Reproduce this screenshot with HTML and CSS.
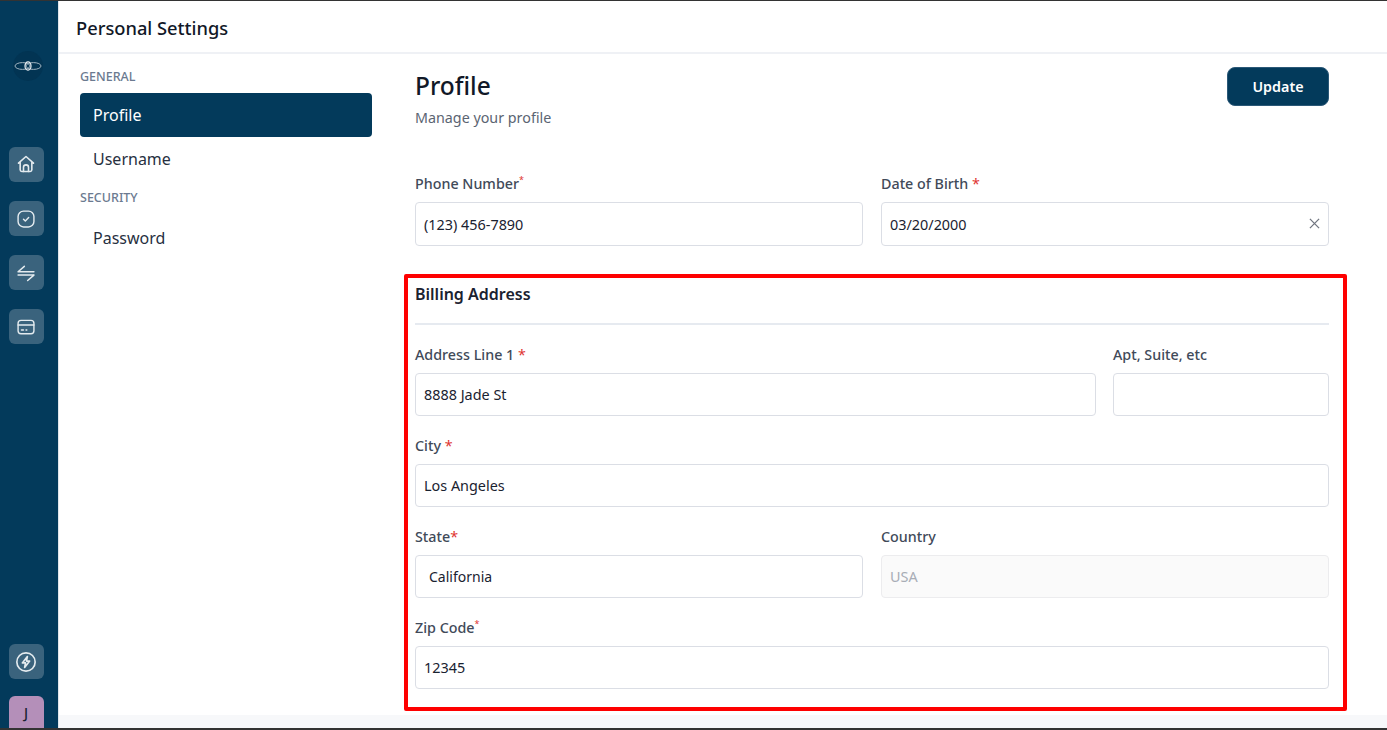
FILE: index.html
```html
<!DOCTYPE html>
<html lang="en">
<head>
<meta charset="utf-8">
<title>Personal Settings</title>
<link rel="stylesheet" href="styles.css">
</head>
<body>
<div class="app">
  <aside class="rail">
    <div class="logo">
      <svg width="30" height="30" viewBox="0 0 30 30" fill="none"><circle cx="15" cy="15" r="15" fill="#023453"/><ellipse cx="9.5" cy="15" rx="7.5" ry="3.4" stroke="#9fb3c0" stroke-width="1"/><ellipse cx="20.5" cy="15" rx="7.5" ry="3.4" stroke="#9fb3c0" stroke-width="1"/><ellipse cx="15" cy="15" rx="3" ry="4.2" stroke="#eef2f5" stroke-width="1.2"/></svg>
    </div>
    <nav class="rail-nav">
      <a class="rail-btn"><svg class="home" width="20" height="20" viewBox="0 0 24 24" fill="none" stroke="#e4ebef" stroke-width="1.9" stroke-linejoin="round" stroke-linecap="round"><path d="M3 11 12 3l9 8M5 9.5V19a2 2 0 0 0 2 2h10a2 2 0 0 0 2-2V9.5"/><path d="M9 21v-5a3 3 0 0 1 6 0v5"/></svg></a>
      <a class="rail-btn"><svg width="20" height="20" viewBox="0 0 24 24" fill="none" stroke="#e4ebef" stroke-width="1.7" stroke-linejoin="round" stroke-linecap="round"><rect x="2.5" y="2.5" width="19" height="19" rx="6.5"/><path d="m9 12.3 2.2 2.2 4-4.2"/></svg></a>
      <a class="rail-btn"><svg width="20" height="20" viewBox="0 0 24 24" fill="none" stroke="#e4ebef" stroke-width="1.8" stroke-linejoin="round" stroke-linecap="round"><path d="M2.5 10.5h19M2.5 10.5 10 4M21.5 14.5h-19M21.5 14.5 14 21"/></svg></a>
      <a class="rail-btn"><svg width="20" height="20" viewBox="0 0 24 24" fill="none" stroke="#e4ebef" stroke-width="1.7" stroke-linejoin="round" stroke-linecap="round"><rect x="2.5" y="4" width="19" height="16" rx="3.5"/><path d="M2.5 9.5h19M6.5 15.5h2.5M12 15.5h1"/></svg></a>
    </nav>
    <div class="rail-bottom">
      <a class="rail-btn"><svg width="22" height="22" viewBox="0 0 24 24" fill="none" stroke="#e4ebef" stroke-width="1.8" stroke-linejoin="round"><circle cx="12" cy="12" r="10"/><path d="M13.5 6 8 13h3.5l-1 5L16 11h-3.5z"/></svg></a>
      <div class="avatar">J</div>
    </div>
  </aside>
  <div class="page">
    <header class="topbar"><h1>Personal Settings</h1></header>
    <div class="body">
      <nav class="side">
        <div class="side-head">GENERAL</div>
        <a class="side-item active">Profile</a>
        <a class="side-item">Username</a>
        <div class="side-head second">SECURITY</div>
        <a class="side-item">Password</a>
      </nav>
      <main class="content">
        <div class="title-row">
          <div class="title-text">
            <h2>Profile</h2>
            <p class="sub">Manage your profile</p>
          </div>
          <button class="update">Update</button>
        </div>
        <div class="grid two first">
          <div class="field">
            <label>Phone Number<sup class="star">*</sup></label>
            <div class="input tall">(123) 456-7890</div>
          </div>
          <div class="field">
            <label>Date of Birth <span class="star">*</span></label>
            <div class="input tall between"><span>03/20/2000</span>
              <svg width="11" height="11" viewBox="0 0 12 12" stroke="#70757f" stroke-width="1.4"><path d="M1 1l10 10M11 1 1 11"/></svg>
            </div>
          </div>
        </div>
        <section class="billing">
          <h3>Billing Address</h3>
          <div class="grid addr">
            <div class="field">
              <label>Address Line 1 <span class="star">*</span></label>
              <div class="input">8888 Jade St</div>
            </div>
            <div class="field">
              <label>Apt, Suite, etc</label>
              <div class="input"></div>
            </div>
          </div>
          <div class="field">
            <label>City <span class="star">*</span></label>
            <div class="input">Los Angeles</div>
          </div>
          <div class="grid two">
            <div class="field">
              <label>State<span class="star">*</span></label>
              <div class="input inset">California</div>
            </div>
            <div class="field">
              <label>Country</label>
              <div class="input disabled">USA</div>
            </div>
          </div>
          <div class="field">
            <label>Zip Code<sup class="star">*</sup></label>
            <div class="input">12345</div>
          </div>
        </section>
      </main>
    </div>
    <div class="foot"></div>
  </div>
</div>
<div class="annotation"></div>
</body>
</html>
```
FILE: styles.css
```css
* { box-sizing: border-box; }
html, body { margin: 0; height: 730px; overflow: hidden; }
body {
  font-family: "Noto Sans", "Open Sans", sans-serif;
  color: #1a2230;
  background: #fff;
  position: relative;
}
.app {
  display: flex;
  height: 730px;
  border-top: 1px solid #333;
  border-bottom: 2px solid #333;
}
.rail {
  width: 59px;
  flex: none;
  background: #033a5b;
  display: flex;
  flex-direction: column;
  align-items: center;
  padding-right: 6px;
  border-right: 1px solid #dfe5ea;
}
.logo { margin: 50px 0 0 4px; height: 30px; display: flex; align-items: center; }
.rail-nav { display: flex; flex-direction: column; gap: 19px; margin-top: 66px; }
.rail-btn {
  width: 35px;
  height: 35px;
  border-radius: 6px;
  background: #3a637d;
  display: flex;
  align-items: center;
  justify-content: center;
}
.home { margin-top: -2px; }
.rail-bottom { margin-top: auto; display: flex; flex-direction: column; gap: 17px; }
.avatar {
  width: 35px;
  height: 32px;
  border-radius: 6px 6px 0 0;
  background: #b48fb9;
  color: #1a2230;
  font-size: 14px;
  font-weight: 500;
  display: flex;
  align-items: center;
  justify-content: center;
}
.page { flex: 1; display: flex; flex-direction: column; min-width: 0; }
.topbar {
  height: 53px;
  border-bottom: 2px solid #eff1f5;
  padding: 13px 0 0 17px;
}
h1 { margin: 0; font-size: 18.3px; line-height: 28px; font-weight: 500; color: #111827; }
.body { flex: 1; display: flex; min-height: 0; }
.side { width: 313px; flex: none; padding: 14px 0 0 21px; }
.side-head { font-size: 12.5px; line-height: 18px; font-weight: 500; color: #6b7a90; margin-bottom: 7px; }
.side-head.second { margin-top: 8px; margin-bottom: 9px; }
.side-item {
  display: block;
  height: 44px;
  padding: 0 13px;
  font-size: 16px;
  line-height: 44px;
  color: #27303f;
  border-radius: 4px;
}
.side-item.active { background: #033a5b; color: #fff; }
.content { width: 914px; margin-left: 43px; padding-top: 13px; }
.title-row { display: flex; justify-content: space-between; align-items: flex-start; height: 107px; }
.title-text { margin-top: 1px; }
h2 { margin: 0; font-size: 24.5px; line-height: 36px; font-weight: 500; color: #111827; }
.sub { margin: 4px 0 0; font-size: 14.3px; line-height: 20px; color: #5b6472; }
.update {
  width: 102px;
  height: 39px;
  border: 1px solid #2b5877;
  border-radius: 8px;
  background: #033a5b;
  color: #fff;
  font: 600 14.3px "Noto Sans", sans-serif;
}
.grid { display: grid; gap: 17px; }
.two { grid-template-columns: 448px 448px; gap: 18px; }
.addr { grid-template-columns: 681px 216px; }
.first { margin-bottom: 36px; }
.field { display: block; }
.field label {
  display: block;
  height: 28px;
  font-size: 14.3px;
  line-height: 20px;
  font-weight: 500;
  color: #414a59;
}
.star { color: #e0342f; font-weight: 400; }
sup.star { font-size: 9px; line-height: 0; }
.input {
  height: 43px;
  border: 1px solid #dbdee5;
  border-radius: 4px;
  padding: 0 8px;
  font-size: 14.4px;
  line-height: 41px;
  color: #1a2230;
  background: #fff;
}
.tall { height: 44px; line-height: 43px; }
.between { display: flex; align-items: center; justify-content: space-between; padding-right: 8px; }
.between svg { margin-top: -2px; }
.inset { padding-left: 13px; font-size: 14px; }
.disabled { background: #fafafa; border-color: #ececee; color: #a8adb6; }
.billing > .field, .billing > .grid { margin-bottom: 20px; }
.billing > .field:last-child { margin-bottom: 0; }
h3 {
  margin: 0 0 20px;
  height: 43px;
  font-size: 16px;
  line-height: 24px;
  font-weight: 600;
  color: #1a2230;
  border-bottom: 2px solid #e6eaf0;
}
.foot { height: 13px; flex: none; background: #f7f8fa; }
.annotation {
  position: absolute;
  left: 404px;
  top: 274px;
  width: 943px;
  height: 437px;
  border: 4px solid #fe0000;
  border-radius: 2px;
  pointer-events: none;
}
```
